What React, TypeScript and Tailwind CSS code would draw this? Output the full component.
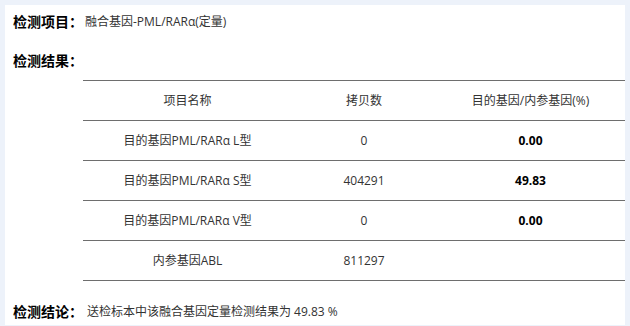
import React from "react";

const rows = [
  { name: "目的基因PML/RARα L型", copy: "0", ratio: "0.00" },
  { name: "目的基因PML/RARα S型", copy: "404291", ratio: "49.83" },
  { name: "目的基因PML/RARα V型", copy: "0", ratio: "0.00" },
  { name: "内参基因ABL", copy: "811297", ratio: "" },
];

export default function App() {
  return (
    <div
      className="w-[630px] h-[326px] bg-[#edf2fa] pt-[5px] pl-[5px] overflow-hidden"
      style={{ fontFamily: '"Open Sans", "Noto Sans CJK SC", sans-serif' }}
    >
      <div className="w-[620px] h-[320px] bg-white overflow-hidden text-[#333]">
        <div className="h-[34px] flex items-center pl-[8px]">
          <span className="text-[14px] font-bold text-black leading-none">检测项目：</span>
          <span className="text-[12px] ml-[2px] leading-none">融合基因-PML/RARα(定量)</span>
        </div>
        <div className="h-[41px] flex items-center pt-[3px] pl-[8px]">
          <span className="text-[14px] font-bold text-black leading-none">检测结果：</span>
        </div>
        <div className="ml-[78px] w-[542px] border-t border-[#6e6e6e] text-[12px]">
          <div className="grid grid-cols-[209px_144px_189px] h-[40px] items-center border-b border-[#6e6e6e] text-center">
            <div>项目名称</div>
            <div>拷贝数</div>
            <div>目的基因/内参基因(%)</div>
          </div>
          {rows.map((r) => (
            <div
              key={r.name}
              className="grid grid-cols-[209px_144px_189px] h-[40px] items-center border-b border-[#6e6e6e] text-center"
            >
              <div>{r.name}</div>
              <div>{r.copy}</div>
              <div className="font-bold text-black">{r.ratio}</div>
            </div>
          ))}
        </div>
        <div className="h-[44px] flex items-center pt-[18px] pl-[8px]">
          <span className="text-[14px] font-bold text-black leading-none">检测结论：</span>
          <span className="text-[12px] ml-[4px] leading-none">送检标本中该融合基因定量检测结果为 49.83 %</span>
        </div>
      </div>
    </div>
  );
}
